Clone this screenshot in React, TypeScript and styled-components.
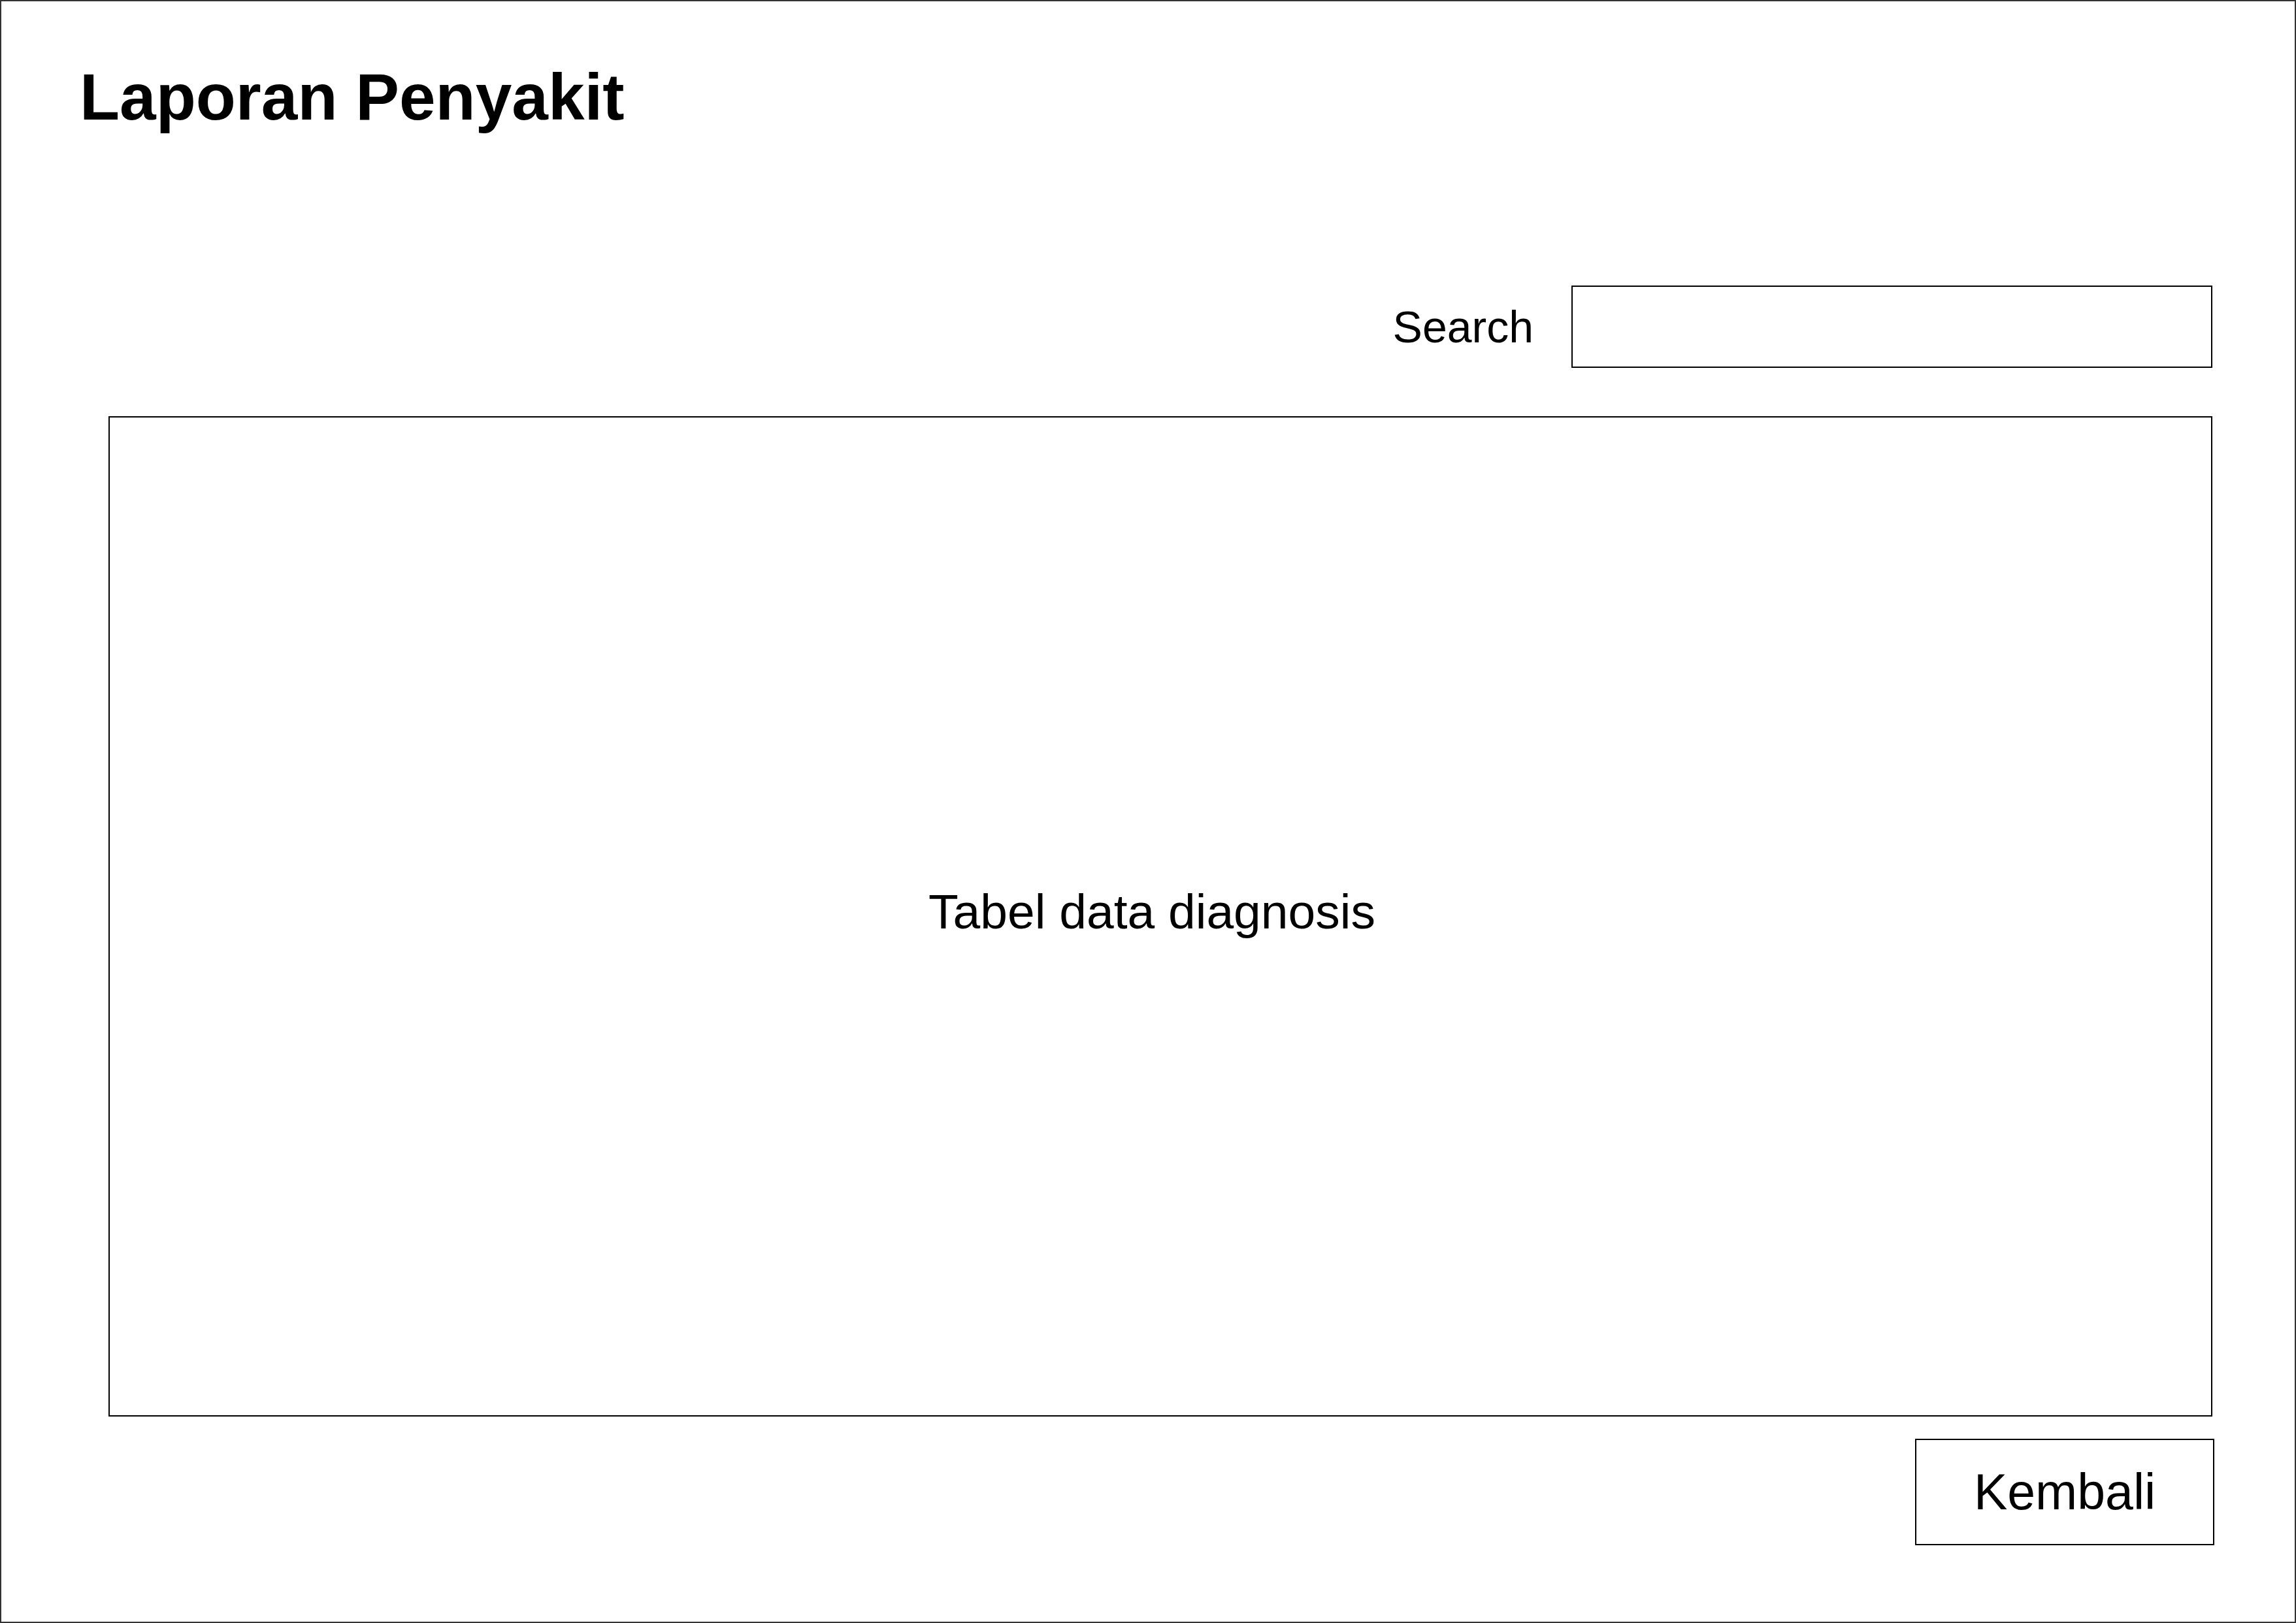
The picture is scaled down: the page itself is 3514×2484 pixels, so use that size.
import React from "react";
import styled, { createGlobalStyle } from "styled-components";

const GlobalStyle = createGlobalStyle`
  html, body {
    margin: 0;
    padding: 0;
    background: #ffffff;
  }
  * { box-sizing: border-box; }
`;

const Frame = styled.div`
  width: 3514px;
  height: 2484px;
  border: 2px solid #333333;
  background: #ffffff;
  display: flex;
  flex-direction: column;
  font-family: "Liberation Sans", Arial, sans-serif;
  color: #000000;
  padding: 96px 126px 0 120px;
`;

const Title = styled.h1`
  margin: 0;
  font-size: 100px;
  font-weight: 700;
  line-height: 1;
`;

const Content = styled.div`
  display: flex;
  flex-direction: column;
  margin-left: 44px;
`;

const SearchRow = styled.div`
  display: flex;
  align-items: center;
  justify-content: flex-end;
  gap: 58px;
  margin-top: 239px;
`;

const SearchLabel = styled.label`
  font-size: 68px;
  line-height: 1;
`;

const SearchInput = styled.input`
  width: 981px;
  height: 126px;
  border: 2px solid #000000;
  background: #ffffff;
  outline: none;
  padding: 0 20px;
  font-family: inherit;
  font-size: 60px;
`;

const TableBox = styled.div`
  margin-top: 74px;
  height: 1531px;
  border: 2px solid #000000;
  display: flex;
  align-items: center;
  justify-content: center;
  padding: 0 26px 14px 0;
  font-size: 75px;
  line-height: 1;
`;

const Footer = styled.div`
  display: flex;
  justify-content: flex-end;
  margin-top: 34px;
  margin-right: -3px;
`;

const BackButton = styled.button`
  width: 458px;
  height: 163px;
  border: 2px solid #000000;
  background: #ffffff;
  font-family: inherit;
  font-size: 77px;
  line-height: 1;
  color: #000000;
  padding: 0;
  cursor: pointer;
`;

export default function App() {
  return (
    <>
      <GlobalStyle />
      <Frame>
        <Title>Laporan Penyakit</Title>
        <Content>
          <SearchRow>
            <SearchLabel htmlFor="search">Search</SearchLabel>
            <SearchInput id="search" type="text" />
          </SearchRow>
          <TableBox>Tabel data diagnosis</TableBox>
          <Footer>
            <BackButton type="button">Kembali</BackButton>
          </Footer>
        </Content>
      </Frame>
    </>
  );
}
